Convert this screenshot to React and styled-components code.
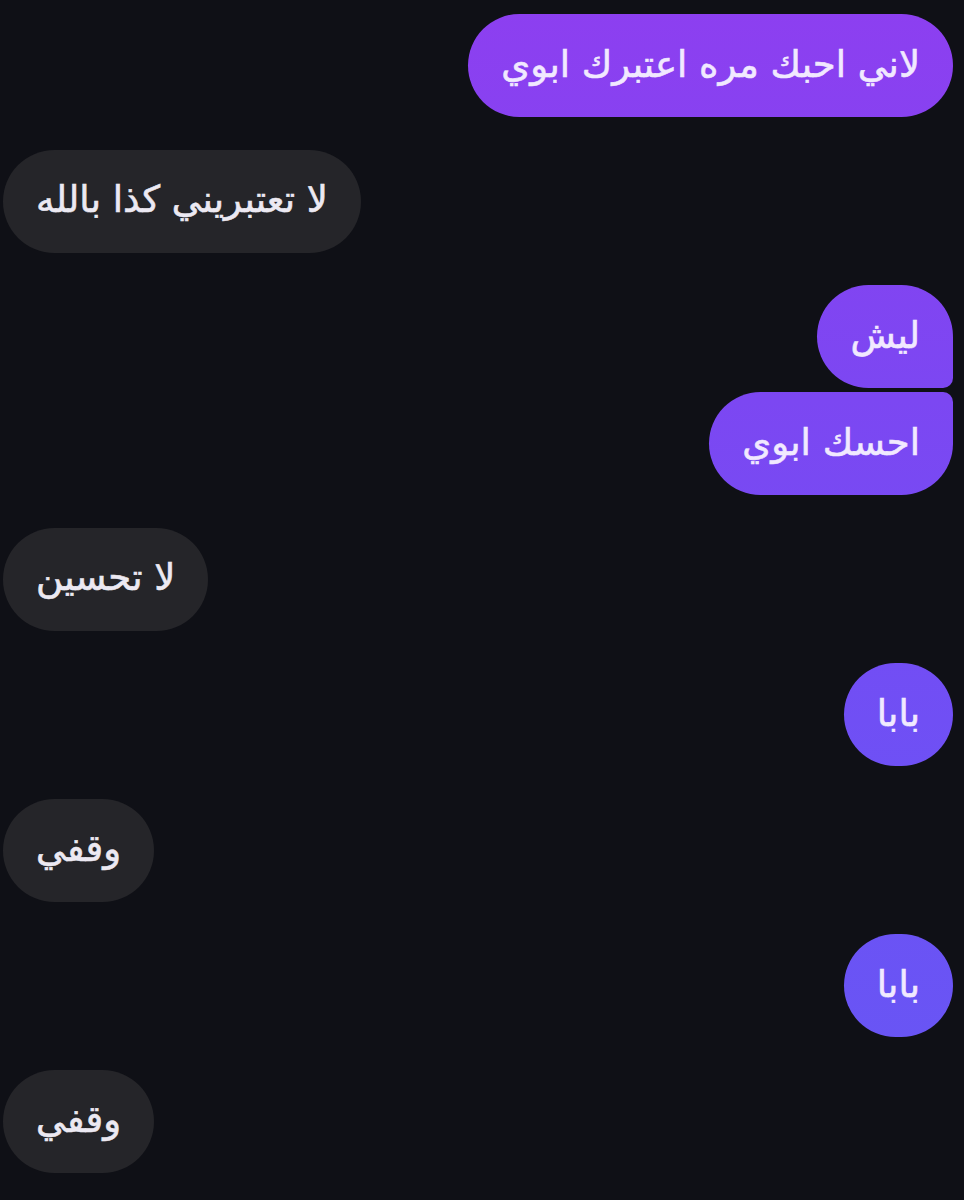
import React from "react";
import styled, { createGlobalStyle, css } from "styled-components";

const messages = [
  { id: 1, mine: true, text: "لاني احبك مره اعتبرك ابوي" },
  { id: 2, mine: false, text: "لا تعتبريني كذا بالله" },
  { id: 3, mine: true, text: "ليش", group: "first" },
  { id: 4, mine: true, text: "احسك ابوي", group: "last" },
  { id: 5, mine: false, text: "لا تحسين" },
  { id: 6, mine: true, text: "بابا" },
  { id: 7, mine: false, text: "وقفي" },
  { id: 8, mine: true, text: "بابا" },
  { id: 9, mine: false, text: "وقفي" },
];

export default function App() {
  return (
    <>
      <GlobalStyle />
      <Chat>
        {messages.map((m) => (
          <Row key={m.id} $mine={m.mine} $tight={m.group === "last"}>
            <Bubble $mine={m.mine} $group={m.group}>
              {m.text}
            </Bubble>
          </Row>
        ))}
      </Chat>
    </>
  );
}

const GlobalStyle = createGlobalStyle`
  html, body {
    margin: 0;
    background: #0f1016;
  }
  body {
    font-family: "DejaVu Sans", "Noto Sans", sans-serif;
    overflow: hidden;
  }
`;

const Chat = styled.div`
  display: flex;
  flex-direction: column;
  padding: 14px 11px 0 3px;
  height: 1200px;
  box-sizing: border-box;
  background: #0f1016;
`;

const Row = styled.div`
  display: flex;
  justify-content: ${(p) => (p.$mine ? "flex-end" : "flex-start")};
  margin-top: ${(p) => (p.$tight ? "4px" : "32.5px")};
  &:first-child {
    margin-top: 0;
  }
`;

const Bubble = styled.div`
  direction: rtl;
  box-sizing: border-box;
  min-width: 108px;
  height: 103px;
  padding: 0 33px 2px;
  display: flex;
  align-items: center;
  justify-content: center;
  border-radius: 52px;
  font-size: 37px;
  line-height: 44px;
  -webkit-text-stroke: 0.6px currentColor;
  color: #ece9f2;
  background: #252529;

  ${(p) =>
    p.$mine &&
    css`
      color: #f1e9ff;
      background: linear-gradient(180deg, #8d3ff0 0px, #7c47f2 400px, #6d51f5 800px, #6657f4 1200px);
      background-attachment: fixed;
    `}

  ${(p) =>
    p.$group === "first" &&
    css`
      border-bottom-right-radius: 10px;
    `}

  ${(p) =>
    p.$group === "last" &&
    css`
      border-top-right-radius: 10px;
    `}
`;
